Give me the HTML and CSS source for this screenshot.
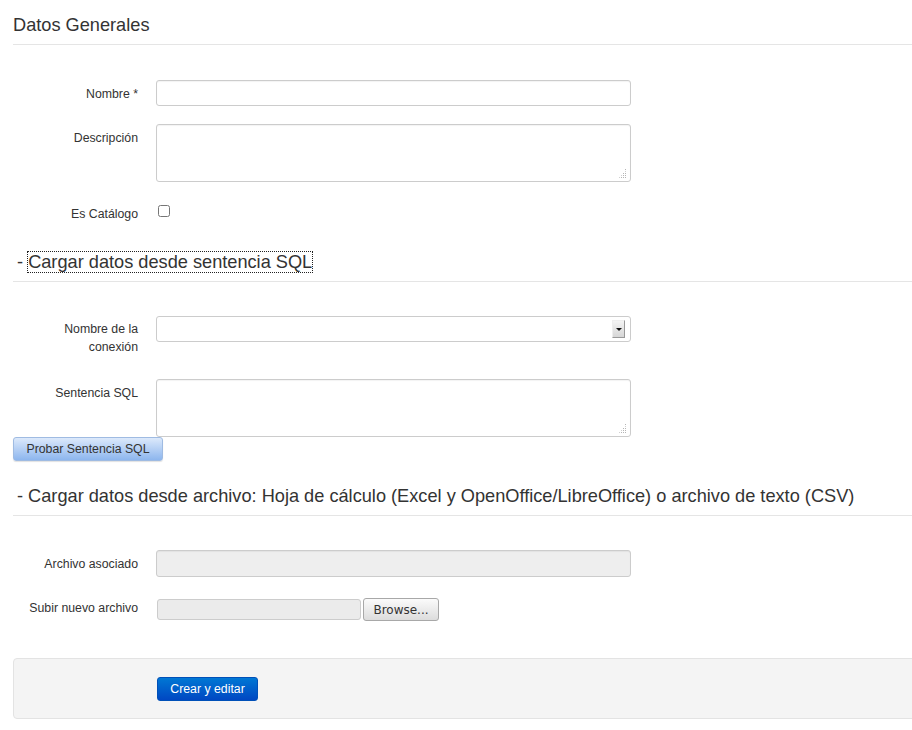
FILE: index.html
```html
<!DOCTYPE html>
<html lang="es">
<head>
<meta charset="utf-8">
<title>Datos Generales</title>
<link rel="stylesheet" href="styles.css">
</head>
<body>
<div class="page">
  <form class="form">
    <div class="legend legend-first">Datos Generales</div>

    <div class="row">
      <label class="label">Nombre *</label>
      <div class="control"><input class="input" type="text"></div>
    </div>
    <div class="row">
      <label class="label">Descripción</label>
      <div class="control">
        <div class="ta-wrap">
          <textarea class="textarea"></textarea>
          <svg class="grip" width="9" height="9" viewBox="0 0 9 9"><g fill="#b5b5b5"><rect x="8" y="0" width="1" height="1"/><rect x="8" y="2" width="1" height="1" fill="#d0d0d0"/><rect x="6" y="4" width="1" height="1"/><rect x="8" y="4" width="1" height="1"/><rect x="4" y="6" width="1" height="1" fill="#d0d0d0"/><rect x="6" y="6" width="1" height="1"/><rect x="8" y="6" width="1" height="1"/><rect x="2" y="8" width="1" height="1" fill="#d0d0d0"/><rect x="4" y="8" width="1" height="1"/><rect x="6" y="8" width="1" height="1"/><rect x="8" y="8" width="1" height="1"/></g></svg>
        </div>
      </div>
    </div>
    <div class="row">
      <label class="label">Es Catálogo</label>
      <div class="control"><input class="check" type="checkbox"></div>
    </div>

    <div class="legend legend-sub legend-sql">- <span class="focus">Cargar datos desde sentencia SQL</span></div>

    <div class="row row-conn">
      <label class="label">Nombre de la conexión</label>
      <div class="control">
        <div class="select"><span class="select-btn"><span class="caret"></span></span></div>
      </div>
    </div>
    <div class="row row-sql">
      <label class="label">Sentencia SQL</label>
      <div class="control">
        <div class="ta-wrap">
          <textarea class="textarea"></textarea>
          <svg class="grip" width="9" height="9" viewBox="0 0 9 9"><g fill="#b5b5b5"><rect x="8" y="0" width="1" height="1"/><rect x="8" y="2" width="1" height="1" fill="#d0d0d0"/><rect x="6" y="4" width="1" height="1"/><rect x="8" y="4" width="1" height="1"/><rect x="4" y="6" width="1" height="1" fill="#d0d0d0"/><rect x="6" y="6" width="1" height="1"/><rect x="8" y="6" width="1" height="1"/><rect x="2" y="8" width="1" height="1" fill="#d0d0d0"/><rect x="4" y="8" width="1" height="1"/><rect x="6" y="8" width="1" height="1"/><rect x="8" y="8" width="1" height="1"/></g></svg>
        </div>
      </div>
    </div>
    <div class="btn-line"><button type="button" class="btn-test">Probar Sentencia SQL</button></div>

    <div class="legend legend-sub legend-file">- Cargar datos desde archivo: Hoja de cálculo (Excel y OpenOffice/LibreOffice) o archivo de texto (CSV)</div>

    <div class="row">
      <label class="label">Archivo asociado</label>
      <div class="control"><div class="input input-disabled"></div></div>
    </div>
    <div class="row row-upload">
      <label class="label">Subir nuevo archivo</label>
      <div class="control">
        <div class="file">
          <span class="file-box"></span>
          <span class="file-btn">Browse...</span>
        </div>
      </div>
    </div>

    <div class="actions">
      <button type="button" class="btn-primary">Crear y editar</button>
    </div>
  </form>
</div>
</body>
</html>
```
FILE: styles.css
```css
html, body {
  margin: 0;
  padding: 0;
  overflow: hidden;
  background: #fff;
}
body {
  font-family: "Liberation Sans", Arial, sans-serif;
  font-size: 12px;
  color: #333;
}
.page {
  padding-left: 13px;
  width: 920px;
}
.form {
  margin: 0;
}
.legend {
  font-size: 18.2px;
  line-height: 38px;
  height: 38px;
  color: #333;
  border-bottom: 1px solid #e5e5e5;
  white-space: nowrap;
}
.legend-first {
  margin-top: 6px;
  margin-bottom: 35px;
}
.legend-sub {
  padding-left: 4px;
  margin-bottom: 34px;
}
.legend-sql {
  margin-top: -1px;
}
.legend-file {
  margin-top: 16px;
}
.focus {
  outline: 1px dotted #222;
  outline-offset: 0;
}
.row {
  display: grid;
  grid-template-columns: 115px 475px;
  column-gap: 18px;
  padding-left: 10px;
  margin-bottom: 18px;
  align-items: start;
}
.label {
  text-align: right;
  line-height: 18px;
  padding: 5px 0 3px;
  font-size: 12.3px;
  color: #333;
}
.control {
  min-height: 26px;
}
.input {
  box-sizing: border-box;
  display: block;
  width: 475px;
  height: 26px;
  margin: 0;
  border: 1px solid #ccc;
  border-radius: 3px;
  background: #fff;
  box-shadow: inset 0 1px 1px rgba(0,0,0,0.05);
}
.input-disabled {
  background: #eee;
  height: 27px;
}
.ta-wrap {
  position: relative;
  width: 475px;
  height: 58px;
}
.textarea {
  box-sizing: border-box;
  display: block;
  width: 475px;
  height: 58px;
  margin: 0;
  border: 1px solid #ccc;
  border-radius: 3px;
  background: #fff;
  box-shadow: inset 0 1px 1px rgba(0,0,0,0.05);
  font-family: inherit;
  resize: none;
}
.grip {
  position: absolute;
  right: 5px;
  bottom: 4px;
  display: block;
}
.check {
  margin: 5px 0 0 2px;
  width: 12px;
  height: 12px;
}
.row-conn {
  margin-bottom: 19px;
}
.row-conn .label {
  padding-top: 4px;
  padding-bottom: 4px;
}
.select {
  box-sizing: border-box;
  width: 475px;
  height: 26px;
  border: 1px solid #ccc;
  border-radius: 3px;
  background: #fff;
  display: flex;
  justify-content: flex-end;
  align-items: center;
  padding-right: 5px;
}
.select-btn {
  box-sizing: border-box;
  width: 13px;
  height: 18px;
  background: linear-gradient(#f4f4f4, #d6d6d6);
  border-top: 1px solid #eee;
  border-left: 1px solid #eee;
  border-right: 1px solid #999;
  border-bottom: 1px solid #999;
  display: flex;
  align-items: center;
  justify-content: center;
}
.caret {
  width: 0;
  height: 0;
  border-left: 3px solid transparent;
  border-right: 3px solid transparent;
  border-top: 3px solid #111;
}
.row-sql {
  margin-bottom: 0;
}
.btn-line {
  display: flex;
}
.btn-test {
  box-sizing: border-box;
  width: 150px;
  height: 24px;
  margin: 0;
  padding: 0;
  border: 1px solid #9fbbe2;
  border-radius: 3px;
  background: linear-gradient(#dce9fb, #8db6ee);
  color: #333;
  font-family: "Liberation Sans", Arial, sans-serif;
  font-size: 12.3px;
  box-shadow: 0 1px 1px rgba(0,0,0,0.12);
}
.row-upload .control {
  padding-top: 3px;
}
.row-upload .label {
  padding-top: 4px;
  padding-bottom: 4px;
}
.file {
  display: flex;
  align-items: center;
  gap: 2px;
  padding-left: 1px;
}
.file-box {
  box-sizing: border-box;
  width: 204px;
  height: 21px;
  border: 1px solid #ccc;
  border-radius: 3px;
  background: #ebebeb;
}
.file-btn {
  box-sizing: border-box;
  width: 76px;
  height: 23px;
  border: 1px solid #a8a8a8;
  border-radius: 3px;
  background: linear-gradient(#fbfbfb, #dcdcdc);
  font-family: "DejaVu Sans", sans-serif;
  font-size: 12px;
  color: #333;
  display: flex;
  align-items: center;
  justify-content: center;
}
.actions {
  margin-top: 34px;
  box-sizing: border-box;
  height: 61px;
  padding: 18px 0 0 143px;
  background: #f4f4f4;
  border: 1px solid #e3e3e3;
  border-radius: 4px;
}
.btn-primary {
  box-sizing: border-box;
  width: 101px;
  height: 24px;
  margin: 0;
  padding: 0;
  border: 1px solid #0050b8;
  border-radius: 3px;
  background: linear-gradient(#0077d4, #0047c2);
  color: #fff;
  font-family: "Liberation Sans", Arial, sans-serif;
  font-size: 12.3px;
}
```
